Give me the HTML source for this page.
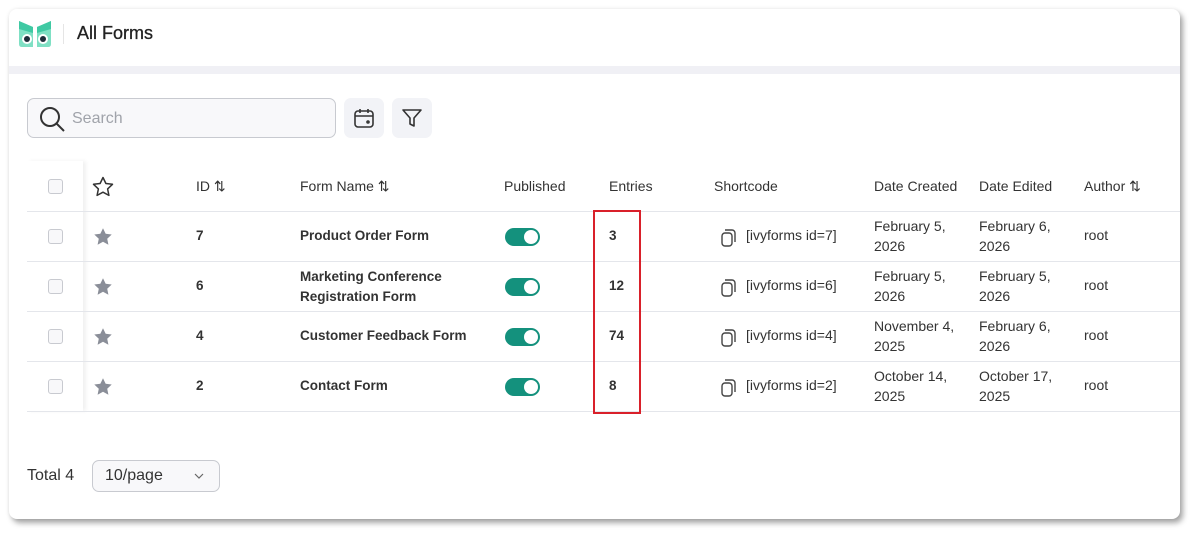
<!DOCTYPE html>
<html><head><meta charset="utf-8"><style>
*{box-sizing:border-box;margin:0;padding:0}
body{width:1201px;height:540px;background:#fff;font-family:"Liberation Sans",sans-serif;color:#303133;position:relative;overflow:hidden}
.card{position:absolute;left:9px;top:9px;width:1171px;height:510px;background:#fff;border-radius:8px;box-shadow:3px 4px 6px rgba(0,0,0,.35),0 0 4px rgba(0,0,0,.08);overflow:hidden}
.band{position:absolute;left:0;top:57px;width:100%;height:8px;background:#f0f0f5}
.a{position:absolute}
.t{font-size:14px;color:#333}
.b{font-weight:bold;color:#333;font-size:13.5px}
.hl{position:absolute;left:18px;width:1153px;height:1px;background:#e4e6eb}
.cb{position:absolute;left:39px;width:15px;height:15px;border:1px solid #c8cad0;border-radius:3px;background:#f8f8fa}
.tog{position:absolute;left:496px;width:35px;height:18px;border-radius:9px;background:#14917d}
.tog:after{content:"";position:absolute;right:2px;top:2px;width:14px;height:14px;border-radius:50%;background:#fff}
</style></head><body>
<div class="card">
 <svg class="a" style="left:9px;top:10px" width="34" height="30" viewBox="0 0 34 30">
  <path d="M1 2 L15 8 L15 28 L4 28 Q1 28 1 25 Z" fill="#7fe0c4"/>
  <path d="M33 2 L19 8 L19 28 L30 28 Q33 28 33 25 Z" fill="#7fe0c4"/>
  <path d="M1 2 L15 8 L15 14 L1 10Z" fill="#3fc9a3"/><path d="M33 2 L19 8 L19 14 L33 10Z" fill="#3fc9a3"/>
  <circle cx="9" cy="20" r="5" fill="#fff"/><circle cx="9" cy="20" r="3" fill="#1f2d3a"/>
  <circle cx="25" cy="20" r="5" fill="#fff"/><circle cx="25" cy="20" r="3" fill="#1f2d3a"/>
 </svg>
 <div class="a" style="left:54px;top:15px;width:1px;height:20px;background:#e5e5e5"></div>
 <div class="a" style="left:68px;top:14px;font-size:18px;color:#222;-webkit-text-stroke:0.3px #222">All Forms</div>
 <div class="band"></div>
 <div class="a" style="left:18px;top:89px;width:309px;height:40px;border:1px solid #c8cad0;border-radius:7px;background:#f8f8fa"></div>
 <svg class="a" style="left:29px;top:96px" width="28" height="28" viewBox="0 0 28 28" fill="none" stroke="#333" stroke-width="2"><circle cx="12" cy="12" r="9"/><path d="M18.5 18.5 L26 26"/></svg>
 <div class="a" style="left:63px;top:101px;font-size:16px;color:#a0a3aa">Search</div>
 <div class="a" style="left:335px;top:89px;width:40px;height:40px;border-radius:7px;background:#f2f3f7"></div>
 <svg class="a" style="left:343px;top:97px" width="24" height="24" viewBox="0 0 24 24" fill="none" stroke="#333" stroke-width="1.6"><rect x="3" y="5" width="18" height="16" rx="3"/><path d="M3 10h18M8 3v4M16 3v4"/><circle cx="16" cy="16" r="1"/></svg>
 <div class="a" style="left:383px;top:89px;width:40px;height:40px;border-radius:7px;background:#f2f3f7"></div>
 <svg class="a" style="left:391px;top:97px" width="24" height="24" viewBox="0 0 24 24" fill="none" stroke="#333" stroke-width="1.6" stroke-linejoin="round"><path d="M3 4h18l-7 8v8l-4-2v-6z"/></svg>

 <div class="a" style="left:18px;top:152px;width:56px;height:250px;box-shadow:3px 0 4px rgba(0,0,0,.06);background:#fff"></div>
 <div class="hl" style="top:202px"></div><div class="hl" style="top:252px"></div><div class="hl" style="top:302px"></div><div class="hl" style="top:352px"></div><div class="hl" style="top:402px"></div>
 <div class="cb" style="top:170px"></div>
 <svg class="a" style="left:82px;top:166px" width="24" height="24" viewBox="0 0 24 24" fill="none" stroke="#333" stroke-width="1.5" stroke-linejoin="round"><path d="M12 2.5l2.9 6 6.6.8-4.9 4.6 1.3 6.5L12 17.2l-5.9 3.2 1.3-6.5L2.5 9.3l6.6-.8z"/></svg>
 <div class="a t" style="left:187px;top:169px">ID ⇅</div>
 <div class="a t" style="left:291px;top:169px">Form Name ⇅</div>
 <div class="a t" style="left:495px;top:169px">Published</div>
 <div class="a t" style="left:600px;top:169px">Entries</div>
 <div class="a t" style="left:705px;top:169px">Shortcode</div>
 <div class="a t" style="left:865px;top:169px">Date Created</div>
 <div class="a t" style="left:970px;top:169px">Date Edited</div>
 <div class="a t" style="left:1075px;top:169px">Author ⇅</div>

 <div class="cb" style="top:220px"></div><div class="cb" style="top:270px"></div><div class="cb" style="top:320px"></div><div class="cb" style="top:370px"></div>
 <svg class="a" style="left:83px;top:217px" width="22" height="22" viewBox="0 0 24 24" fill="#8a8e98"><path d="M12 2.5l2.9 6 6.6.8-4.9 4.6 1.3 6.5L12 17.2l-5.9 3.2 1.3-6.5L2.5 9.3l6.6-.8z"/></svg>
 <svg class="a" style="left:83px;top:267px" width="22" height="22" viewBox="0 0 24 24" fill="#8a8e98"><path d="M12 2.5l2.9 6 6.6.8-4.9 4.6 1.3 6.5L12 17.2l-5.9 3.2 1.3-6.5L2.5 9.3l6.6-.8z"/></svg>
 <svg class="a" style="left:83px;top:317px" width="22" height="22" viewBox="0 0 24 24" fill="#8a8e98"><path d="M12 2.5l2.9 6 6.6.8-4.9 4.6 1.3 6.5L12 17.2l-5.9 3.2 1.3-6.5L2.5 9.3l6.6-.8z"/></svg>
 <svg class="a" style="left:83px;top:367px" width="22" height="22" viewBox="0 0 24 24" fill="#8a8e98"><path d="M12 2.5l2.9 6 6.6.8-4.9 4.6 1.3 6.5L12 17.2l-5.9 3.2 1.3-6.5L2.5 9.3l6.6-.8z"/></svg>
 <div class="a t b" style="left:187px;top:219px">7</div><div class="a t b" style="left:187px;top:269px">6</div><div class="a t b" style="left:187px;top:319px">4</div><div class="a t b" style="left:187px;top:369px">2</div>
 <div class="a t b" style="left:291px;top:219px">Product Order Form</div>
 <div class="a t b" style="left:291px;top:258px;line-height:20px">Marketing Conference<br>Registration Form</div>
 <div class="a t b" style="left:291px;top:319px">Customer Feedback Form</div>
 <div class="a t b" style="left:291px;top:369px">Contact Form</div>
 <div class="tog" style="top:219px"></div><div class="tog" style="top:269px"></div><div class="tog" style="top:319px"></div><div class="tog" style="top:369px"></div>
 <div class="a t b" style="left:600px;top:219px">3</div><div class="a t b" style="left:600px;top:269px">12</div><div class="a t b" style="left:600px;top:319px">74</div><div class="a t b" style="left:600px;top:369px">8</div>
 <div class="a" style="left:584px;top:201px;width:48px;height:204px;border:2px solid #d9202a"></div>
 <svg class="a" style="left:711px;top:219px" width="18" height="20" viewBox="0 0 18 20" fill="none" stroke="#444" stroke-width="1.4"><path d="M5 2h7a3 3 0 0 1 3 3v9"/><rect x="2" y="5" width="10" height="13" rx="3"/></svg>
 <svg class="a" style="left:711px;top:269px" width="18" height="20" viewBox="0 0 18 20" fill="none" stroke="#444" stroke-width="1.4"><path d="M5 2h7a3 3 0 0 1 3 3v9"/><rect x="2" y="5" width="10" height="13" rx="3"/></svg>
 <svg class="a" style="left:711px;top:319px" width="18" height="20" viewBox="0 0 18 20" fill="none" stroke="#444" stroke-width="1.4"><path d="M5 2h7a3 3 0 0 1 3 3v9"/><rect x="2" y="5" width="10" height="13" rx="3"/></svg>
 <svg class="a" style="left:711px;top:369px" width="18" height="20" viewBox="0 0 18 20" fill="none" stroke="#444" stroke-width="1.4"><path d="M5 2h7a3 3 0 0 1 3 3v9"/><rect x="2" y="5" width="10" height="13" rx="3"/></svg>
 <div class="a t" style="left:737px;top:218px">[ivyforms id=7]</div><div class="a t" style="left:737px;top:268px">[ivyforms id=6]</div><div class="a t" style="left:737px;top:318px">[ivyforms id=4]</div><div class="a t" style="left:737px;top:368px">[ivyforms id=2]</div>
 <div class="a t" style="left:865px;top:207px;line-height:20px">February 5,<br>2026</div>
 <div class="a t" style="left:865px;top:257px;line-height:20px">February 5,<br>2026</div>
 <div class="a t" style="left:865px;top:307px;line-height:20px">November 4,<br>2025</div>
 <div class="a t" style="left:865px;top:357px;line-height:20px">October 14,<br>2025</div>
 <div class="a t" style="left:970px;top:207px;line-height:20px">February 6,<br>2026</div>
 <div class="a t" style="left:970px;top:257px;line-height:20px">February 5,<br>2026</div>
 <div class="a t" style="left:970px;top:307px;line-height:20px">February 6,<br>2026</div>
 <div class="a t" style="left:970px;top:357px;line-height:20px">October 17,<br>2025</div>
 <div class="a t" style="left:1075px;top:218px">root</div><div class="a t" style="left:1075px;top:268px">root</div><div class="a t" style="left:1075px;top:318px">root</div><div class="a t" style="left:1075px;top:368px">root</div>

 <div class="a" style="left:18px;top:458px;font-size:16px;color:#333">Total 4</div>
 <div class="a" style="left:83px;top:451px;width:128px;height:32px;border:1px solid #c8cad0;border-radius:7px;background:#f8f8fa"></div>
 <div class="a" style="left:96px;top:458px;font-size:16px;color:#333">10/page</div>
 <svg class="a" style="left:184px;top:462px" width="12" height="10" viewBox="0 0 12 10" fill="none" stroke="#666" stroke-width="1.2"><path d="M2 3l4 4 4-4"/></svg>
</div>
</body></html>
